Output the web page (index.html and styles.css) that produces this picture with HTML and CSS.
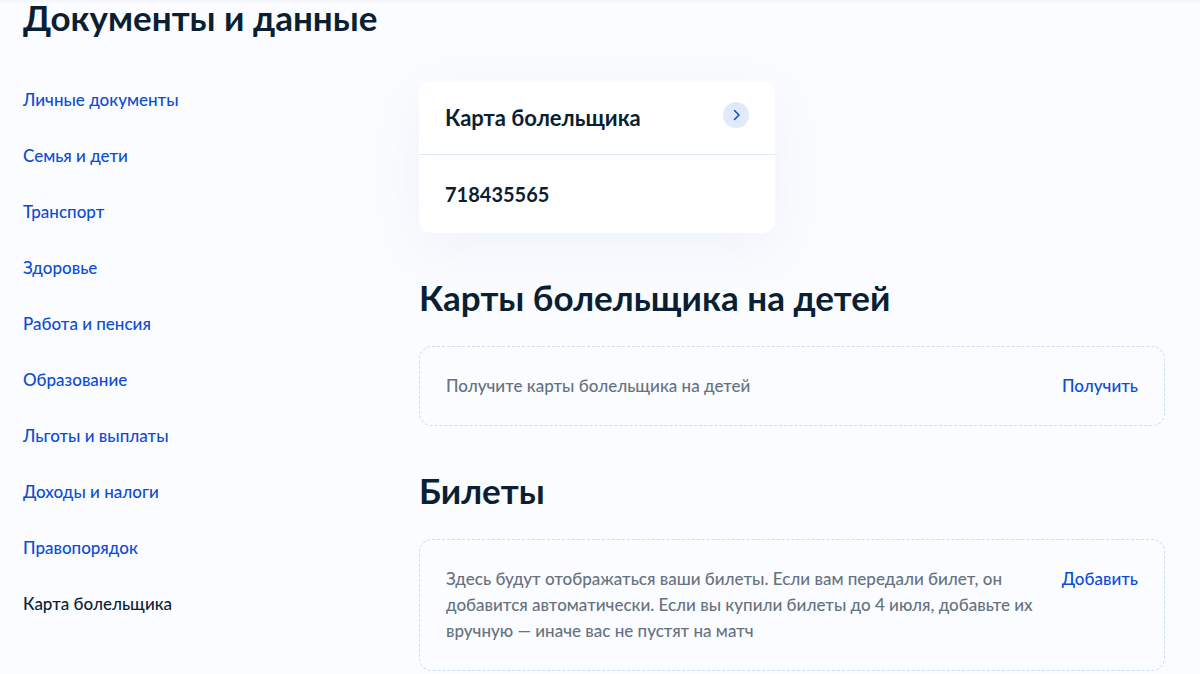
FILE: index.html
```html
<!DOCTYPE html>
<html lang="ru">
<head>
<meta charset="utf-8">
<meta name="viewport" content="width=device-width, initial-scale=1">
<title>Документы и данные</title>
<link rel="stylesheet" href="styles.css">
</head>
<body>
<div class="page">
  <h1 class="page-title">Документы и данные</h1>
  <div class="columns">
    <nav class="menu" aria-label="Разделы">
      <a class="menu-link" href="#personal">Личные документы</a>
      <a class="menu-link" href="#family">Семья и дети</a>
      <a class="menu-link" href="#transport">Транспорт</a>
      <a class="menu-link" href="#health">Здоровье</a>
      <a class="menu-link" href="#work">Работа и пенсия</a>
      <a class="menu-link" href="#education">Образование</a>
      <a class="menu-link" href="#benefits">Льготы и выплаты</a>
      <a class="menu-link" href="#income">Доходы и налоги</a>
      <a class="menu-link" href="#law">Правопорядок</a>
      <a class="menu-link menu-link-active" href="#fan" aria-current="page">Карта болельщика</a>
    </nav>
    <main class="content">
      <section class="card">
        <header class="card-head">
          <h2 class="card-title">Карта болельщика</h2>
          <button class="card-open" type="button" aria-label="Открыть">
            <svg class="card-arrow" viewBox="0 0 26 26" aria-hidden="true"><path d="M11.500 8.500 16 13l-4.500 4.500"/></svg>
          </button>
        </header>
        <p class="card-number">718435565</p>
      </section>
      <section class="block">
        <h2 class="block-title">Карты болельщика на детей</h2>
        <div class="notice">
          <p class="notice-text">Получите карты болельщика на детей</p>
          <button class="notice-action" type="button">Получить</button>
        </div>
      </section>
      <section class="block">
        <h2 class="block-title">Билеты</h2>
        <div class="notice">
          <p class="notice-text">Здесь будут отображаться ваши билеты. Если вам передали билет, он добавится автоматически. Если вы купили билеты до 4 июля, добавьте их вручную — иначе вас не пустят на матч</p>
          <button class="notice-action" type="button">Добавить</button>
        </div>
      </section>
    </main>
  </div>
</div>
</body>
</html>
```
FILE: styles.css
```css
* {
  box-sizing: border-box;
}

body {
  margin: 0;
  background: #fbfcff;
  color: #0b1f33;
  font-family: Lato, "Open Sans", sans-serif;
  font-size: 17px;
  font-weight: 500;
  line-height: 26px;
}

h1,
h2,
p {
  margin: 0;
}

button {
  padding: 0;
  border: 0;
  background: none;
  font: inherit;
  cursor: pointer;
}

.page {
  padding: 0 35px 3px 23px;
  border-top: 2px solid #f5f7fc;
}

.page-title {
  font-size: 35px;
  line-height: 30px;
}

.columns {
  display: grid;
  grid-template-columns: 396px minmax(0, 1fr);
  padding-top: 49px;
}

.menu {
  display: flex;
  flex-direction: column;
  align-items: flex-start;
  gap: 30px;
  padding-top: 6px;
}

.menu-link {
  color: #0d4cd3;
  text-decoration: none;
}

.menu-link-active {
  color: #0b1f33;
}

.card {
  width: 356px;
  max-width: 100%;
  border-radius: 13px;
  background: #fff;
  box-shadow: 0 16px 56px rgba(70, 117, 171, 0.07);
}

.card-head {
  display: flex;
  justify-content: space-between;
  align-items: flex-start;
  padding: 21px 26px 20px;
  border-bottom: 1px solid #dfe9f8;
}

.card-title {
  font-size: 22px;
  line-height: 32px;
}

.card-open {
  display: flex;
  border-radius: 50%;
  background: #e1eafb;
}

.card-arrow {
  width: 26px;
  height: 26px;
  fill: none;
  stroke: #0d4cd3;
  stroke-width: 1.5;
  stroke-linecap: round;
  stroke-linejoin: round;
}

.card-number {
  padding: 26px;
  font-size: 20px;
  font-weight: 700;
}

.block {
  padding-top: 41px;
}

.block-title {
  padding-bottom: 26px;
  font-size: 35px;
  line-height: 46px;
}

.notice {
  display: flex;
  align-items: flex-start;
  gap: 18px;
  padding: 26px;
  border: 1px dashed #cbdcfa;
  border-radius: 13px;
}

.notice-text {
  flex: 1;
  color: #66727f;
}

.notice-action {
  color: #0d4cd3;
}
```
